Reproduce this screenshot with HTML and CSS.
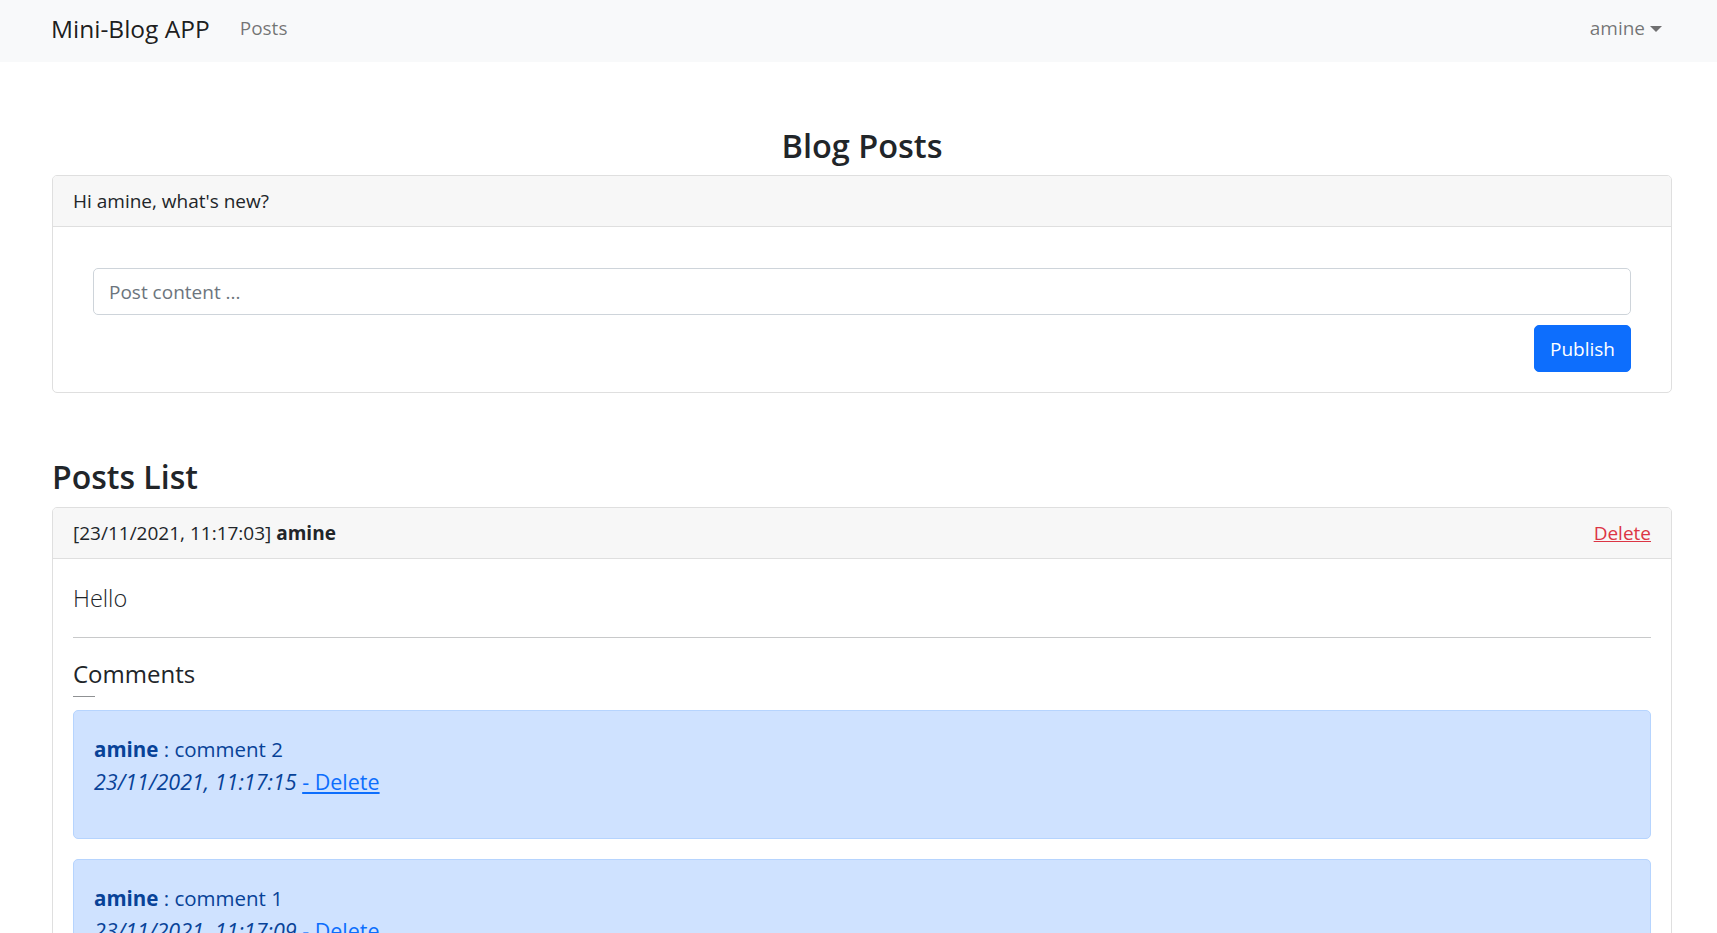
FILE: index.html
```html
<!DOCTYPE html>
<html lang="en">
<head>
<meta charset="utf-8">
<title>Mini-Blog APP</title>
<link rel="stylesheet" href="styles.css">
</head>
<body>
<nav class="navbar">
  <div class="nav-inner">
    <a class="brand" href="#">Mini-Blog APP</a>
    <a class="nav-link" href="#">Posts</a>
    <a class="nav-link dropdown" href="#">amine<span class="caret"></span></a>
  </div>
</nav>

<main class="container">
  <h3 class="page-title">Blog Posts</h3>
  <section class="card">
    <div class="card-header">Hi amine, what's new?</div>
    <div class="card-body">
      <form class="post-form">
        <input class="form-control" type="text" placeholder="Post content ...">
        <div class="form-actions">
          <button class="btn-primary" type="button">Publish</button>
        </div>
      </form>
    </div>
  </section>

  <h3 class="section-title">Posts List</h3>
  <section class="card">
    <div class="card-header split">
      <span>[23/11/2021, 11:17:03] <strong>amine</strong></span>
      <a class="link-danger" href="#">Delete</a>
    </div>
    <div class="card-body">
      <p class="lead">Hello</p>
      <hr class="divider">
      <h5 class="comments-title">Comments</h5>
      <div class="comments-rule"></div>
      <div class="alert">
        <div class="comment-line"><strong>amine</strong> : comment 2</div>
        <div class="comment-meta"><em>23/11/2021, 11:17:15</em> <a href="#">- Delete</a></div>
      </div>
      <div class="alert">
        <div class="comment-line"><strong>amine</strong> : comment 1</div>
        <div class="comment-meta"><em>23/11/2021, 11:17:09</em> <a href="#">- Delete</a></div>
      </div>
    </div>
  </section>
</main>
</body>
</html>
```

FILE: styles.css
```css
* {
  box-sizing: border-box;
}

body {
  margin: 0;
  font-family: "Open Sans", "Noto Sans", sans-serif;
  font-size: 19px;
  line-height: 30px;
  color: #212529;
  background: #fff;
}

a {
  text-decoration: none;
}

.navbar {
  height: 62px;
  background: #f8f9fa;
}

.nav-inner {
  height: 100%;
  margin: 0 45px 0 51px;
  padding-bottom: 6px;
  display: flex;
  align-items: center;
}

.brand {
  font-size: 24.5px;
  line-height: 37px;
  color: rgba(0, 0, 0, 0.9);
  margin-right: 20px;
}

.nav-link {
  padding: 0 10px;
  color: rgba(0, 0, 0, 0.55);
  display: flex;
  align-items: center;
}

.dropdown {
  margin-left: auto;
}

.caret {
  display: inline-block;
  width: 0;
  height: 0;
  margin-left: 5px;
  margin-top: 2px;
  border-top: 6px solid rgba(0, 0, 0, 0.55);
  border-left: 6px solid transparent;
  border-right: 6px solid transparent;
}

.container {
  margin: 0 45px 0 52px;
  padding-bottom: 40px;
}

.page-title,
.section-title {
  font-size: 32.5px;
  line-height: 42px;
  font-weight: 600;
  margin: 0 0 10px;
}

.page-title {
  text-align: center;
  margin-top: 63px;
  margin-bottom: 8px;
  font-size: 32.5px;
}

.section-title {
  margin-top: 63px;
  margin-bottom: 9px;
  font-size: 32px;
}

.card {
  border: 1px solid #dfdfdf;
  border-radius: 5px;
  overflow: hidden;
}

.card-header {
  padding: 10px 20px;
  background: #f7f7f7;
  border-bottom: 1px solid #dfdfdf;
}

.card-header.split {
  display: flex;
  justify-content: space-between;
}

.link-danger {
  color: #dc3545;
  text-decoration: underline;
}

.card-body {
  padding: 20px;
}

.post-form {
  padding: 20px 20px 0;
}

.form-control {
  display: block;
  width: 100%;
  height: 47px;
  padding: 7.5px 15px;
  font-family: inherit;
  font-size: 19px;
  line-height: 30px;
  color: #212529;
  border: 1px solid #ced4da;
  border-radius: 5px;
  background: #fff;
  margin-top: 1px;
}

.form-control::placeholder {
  color: #6c757d;
}

.form-actions {
  display: flex;
  justify-content: flex-end;
  margin-top: 10px;
}

.btn-primary {
  height: 47px;
  padding: 7.5px 15px;
  font-family: inherit;
  font-size: 19px;
  line-height: 30px;
  color: #fff;
  background: #0d6efd;
  border: 1px solid #0d6efd;
  border-radius: 5px;
}

.lead {
  font-size: 23.5px;
  line-height: 37.5px;
  font-weight: 300;
  margin: 1px 0 19px;
}

.divider {
  border: 0;
  border-top: 1px solid #c8c9ca;
  margin: 0 0 21px;
}

.comments-title {
  font-size: 24px;
  line-height: 30px;
  font-weight: 500;
  margin: 0;
}

.comments-rule {
  width: 22px;
  height: 1px;
  background: #8f9193;
  margin: 7px 0 13px;
}

.alert {
  padding: 23px 20px 20px;
  margin-bottom: 20px;
  border: 1px solid #b6d4fe;
  border-radius: 5px;
  background: #cfe2ff;
  color: #084298;
  font-size: 20.5px;
}

.alert strong {
  font-weight: 700;
}

.comment-meta {
  margin: 3px 0 21px;
  font-size: 21.5px;
}

.comment-meta a {
  color: #0d6efd;
  text-decoration: underline;
}
```
